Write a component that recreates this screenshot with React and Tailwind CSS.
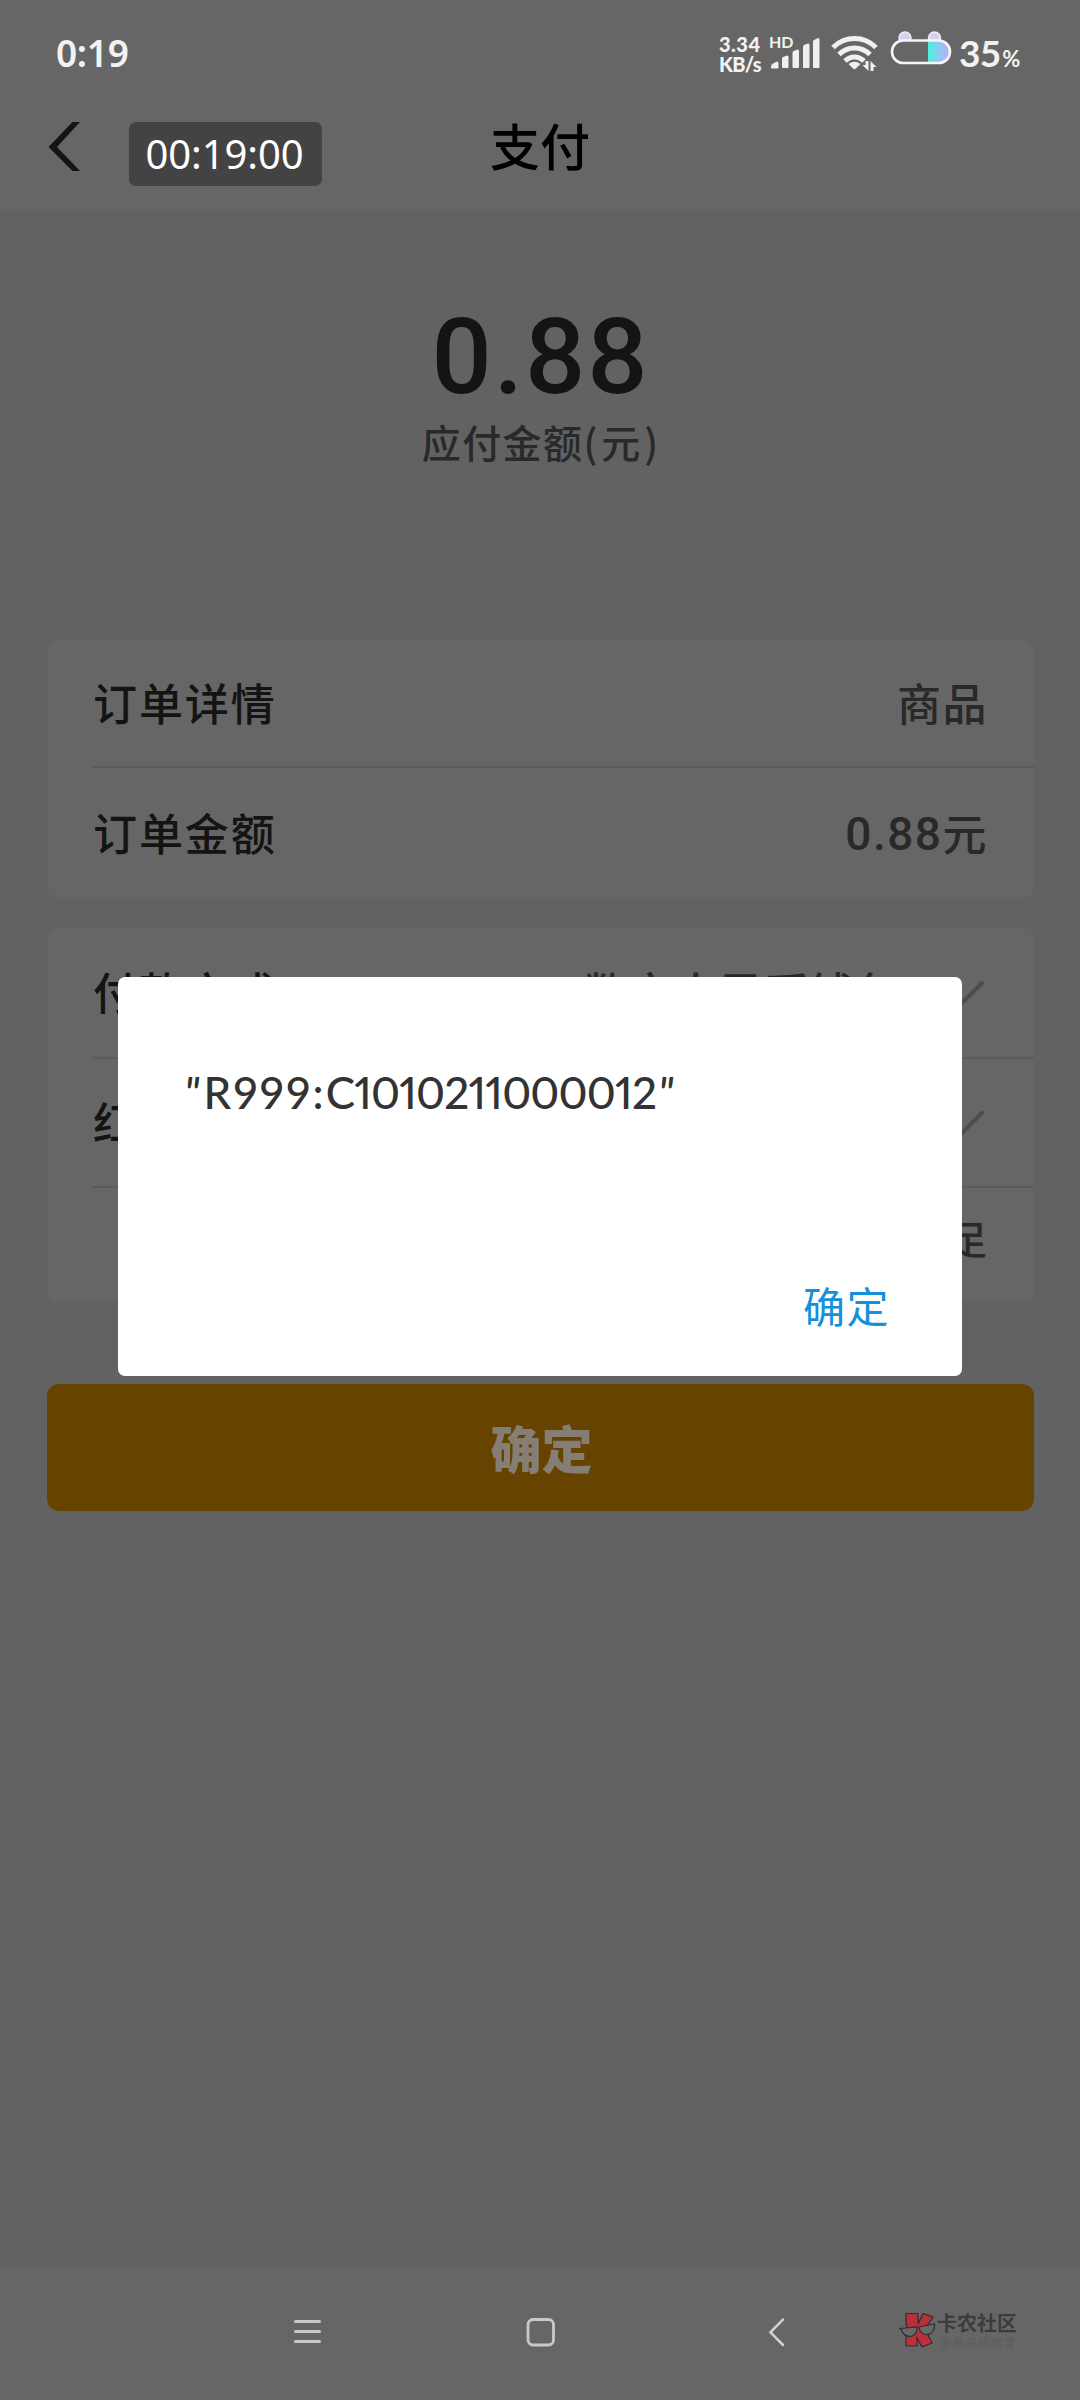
import React from "react";

const orderRows = [
  { label: "订单详情", amount: "", value: "商品", height: "h-[126px]" },
  { label: "订单金额", amount: "0.88", value: "元", height: "h-[131px]" },
];

const payRows = [
  { label: "付款方式", value: "数字人民币钱包", height: "h-[130px]" },
  { label: "红包", value: "", height: "h-[127px]" },
];

const SignalIcon = () => (
  <svg width="50" height="34" viewBox="0 0 50 34" fill="#f0f0f0">
    <path d="M1 31q0-3 3-4l3-1.500q1.500 0 1.500 2v4q0 1-1 1H2q-1 0-1-1Z" />
    <path d="M12 23q0-1 1-2l4-1.500q1.500 0 1.500 1.500v10q0 1-1 1H13q-1 0-1-1Z" />
    <path d="M22.500 17q0-1 1-2l4-1.500q1.500 0 1.500 1.500v16q0 1-1 1h-4.500q-1 0-1-1Z" />
    <path d="M33 11q0-1 1-2l4-1.500q1.500 0 1.500 1.500v22q0 1-1 1H34q-1 0-1-1Z" />
    <path d="M43 6q0-1.500 1-2l4-2q1.500 0 1.500 1.500v27.500q0 1-1 1H44q-1 0-1-1Z" />
  </svg>
);

const WifiIcon = () => (
  <svg width="48" height="36" viewBox="0 0 48 36" fill="none" stroke="#f0f0f0" strokeWidth="5">
    <path d="M2 12.500C14 .500 33 .500 45 12.500" />
    <path d="M8 19.500C17 10.800 30 10.800 39 19.500" />
    <path d="M14 26C19.500 20.500 27.500 20.500 33 26" />
    <path d="M17.500 29Q23.500 24.500 29.500 29L25 33.500Q23.500 35 22 33.500Z" fill="#f0f0f0" stroke="none" />
    <path d="M37.500 26v10l-6-6h3V26ZM39.500 36V26l6 6h-3V36Z" fill="#f0f0f0" stroke="none" />
  </svg>
);

const BatteryIcon = () => (
  <svg width="62" height="38" viewBox="0 0 62 38">
    <defs>
      <linearGradient id="charge" x1="0" x2="1" y1="0" y2="0">
        <stop offset="0" stopColor="#4ff0d8" />
        <stop offset=".5" stopColor="#8cc9f5" />
        <stop offset="1" stopColor="#b9b0ee" />
      </linearGradient>
    </defs>
    <circle cx="15" cy="10" r="6" fill="#d6cff2" stroke="#f0f0f0" strokeWidth="1.500" />
    <circle cx="44.500" cy="10" r="6" fill="#d6cff2" stroke="#f0f0f0" strokeWidth="1.500" />
    <rect x="2" y="12.500" width="58" height="22.500" rx="11.200" fill="#666" />
    <path d="M38 12.500H48.800a11.200 11.200 0 0 1 0 22.500H38Z" fill="url(#charge)" />
    <rect x="2" y="12.500" width="58" height="22.500" rx="11.200" fill="none" stroke="#f6f6f6" strokeWidth="2.600" />
  </svg>
);

const StatusBar = () => (
  <div className="flex h-[102px] items-start pl-[56px] text-[#f2f2f2]">
    <span className="mt-[30px] w-[663px] shrink-0 font-['Noto_Sans'] text-[37px] leading-[46px] font-semibold tracking-[-0.3px]">
      0:19
    </span>
    <div className="mt-[34px] flex font-['Lato'] font-black">
      <div className="w-[51px] shrink-0 text-[20px] leading-[20px]">
        <div className="tracking-[0.5px]">3.34</div>
        <div className="tracking-[-0.7px]">KB/s</div>
      </div>
      <div className="relative w-[61px] shrink-0">
        <span className="absolute top-0 left-[-1px] text-[16px] leading-[15px] font-bold">HD</span>
        <div className="mt-[2px]">
          <SignalIcon />
        </div>
      </div>
      <div className="mt-[1px] w-[59px] shrink-0">
        <WifiIcon />
      </div>
      <div className="-mt-[6px] w-[69px] shrink-0">
        <BatteryIcon />
      </div>
      <div className="flex items-baseline leading-[38px]">
        <span className="text-[37px] font-bold tracking-[-0.8px]">35</span>
        <span className="ml-[2px] text-[22px] font-bold">%</span>
      </div>
    </div>
  </div>
);

const TopBar = () => (
  <header className="h-[210px] bg-[#666666]">
    <StatusBar />
    <div className="relative flex h-[92px] items-start justify-center pt-[2px]">
      <svg className="absolute top-[20px] left-[48px]" width="34" height="50" viewBox="0 0 34 50">
        <path d="M24.500 0H32L9 25 32 49H24.500L.500 25Z" fill="#141414" />
      </svg>
      <div className="absolute top-[20px] left-[129px] flex h-[64px] w-[193px] items-center justify-center rounded-[7px] bg-[#434343] pr-[2px] font-['Noto_Sans'] text-[40px] tracking-[-0.1px] text-white">
        00:19:00
      </div>
      <h1 className="text-[50px] leading-[80px] font-medium text-black">支付</h1>
    </div>
  </header>
);

const ExpandIcon = () => (
  <svg className="mt-[6px]" width="48" height="26" viewBox="0 0 48 26" fill="none" stroke="#4d4d4d" strokeWidth="4" strokeLinecap="round">
    <path d="M2 2l22 22L46 2" />
  </svg>
);

const Divider = () => <div className="ml-[46px] h-[2px] bg-[#5b5b5b]" />;

const OrderCard = () => (
  <section className="h-[258px] rounded-[12px] bg-[#666666]">
    {orderRows.map((row, i) => (
      <React.Fragment key={row.label}>
        {i > 0 && <Divider />}
        <div className={`flex items-center justify-between pr-[46px] pb-[3px] pl-[46px] ${row.height}`}>
          <span className="tracking-[1.900px] text-[#141414]">{row.label}</span>
          <span className="flex items-center tracking-[1.500px] text-[#292929]">
            <span className="mt-[4px] font-['Roboto'] text-[46px]">{row.amount}</span>
            <span>{row.value}</span>
          </span>
        </div>
      </React.Fragment>
    ))}
  </section>
);

const PayCard = () => (
  <section className="mt-[29px] h-[375px] rounded-[12px] bg-[#666666]">
    {payRows.map((row) => (
      <React.Fragment key={row.label}>
        <div className={`flex items-center pr-[50px] pb-[3px] pl-[46px] ${row.height}`}>
          <span className="tracking-[1.900px] text-[#141414]">{row.label}</span>
          <span className="mr-[35px] ml-auto tracking-[1.400px] text-[#292929]">{row.value}</span>
          <ExpandIcon />
        </div>
        <Divider />
      </React.Fragment>
    ))}
    <div className="flex h-[98px] items-center justify-end pr-[47px] text-[39px] text-[#292929]">
      余额不足
    </div>
  </section>
);

const Watermark = () => (
  <div className="absolute top-[42px] left-[899px] flex gap-[1px]">
    <svg width="37" height="38" viewBox="0 0 37 38">
      <path
        d="M7 2.500H19V13L24 2.500 34 6 26 18 33 32 23 36 18 27V35H7V24H8V14H7Z"
        fill="#b9303a"
        stroke="#352b2c"
        strokeWidth="1.200"
      />
      <path d="M1 17.500L18 16Q18.500 24.500 11.500 25.500 4 25.500 2.500 18.500ZM20 16L35.500 13Q36 21.500 29 23.500 21.500 24.500 20 16Z" fill="#6b6869" stroke="#303030" strokeWidth="1.200" />
    </svg>
    <div>
      <div className="text-[20px] leading-[23px] font-bold text-[#3c3c3c]">卡农社区</div>
      <div className="pl-[3px] text-[11px] leading-[16px] font-medium tracking-[1.800px] text-[#5e5e5e]">金融在线教育</div>
    </div>
  </div>
);

const NavBar = () => (
  <nav className="relative mt-auto h-[131px] bg-[#666666]">
    <div className="flex items-start pt-[48px] pl-[294px]">
      <svg width="27" height="30" viewBox="0 0 27 30" stroke="#c9c9c9" strokeWidth="3" strokeLinecap="round">
        <path d="M1.500 4.500H25.500M1.500 14.500H25.500M1.500 24.500H25.500" />
      </svg>
      <svg className="ml-[205px]" width="30" height="30" viewBox="0 0 30 30" fill="none" stroke="#c9c9c9" strokeWidth="2.800">
        <rect x="2" y="2.500" width="25.500" height="25.500" rx="5" />
      </svg>
      <svg className="ml-[212px]" width="18" height="30" viewBox="0 0 18 30" fill="none" stroke="#d2d2d2" strokeWidth="2.500" strokeLinecap="round">
        <path d="M15 2.500L2.500 15.300 15 28" />
      </svg>
    </div>
    <Watermark />
  </nav>
);

const Dialog = () => (
  <div
    role="dialog"
    className="absolute top-[977px] left-[118px] flex h-[399px] w-[844px] flex-col justify-between rounded-[7px] bg-white pt-[85px] pr-[72px] pb-[41px] pl-[66px]"
  >
    <p className="font-['Lato'] text-[44px] leading-[60px] font-medium whitespace-nowrap text-[#333333] proportional-nums">
      <span className="mr-[4px] italic">"</span>
      <span className="tracking-[2.200px]">R999:</span>
      <span className="tracking-[-0.800px]">C1010211000012</span>
      <span className="ml-[2px] italic">"</span>
    </p>
    <button className="self-end text-[42px] leading-[60px] tracking-[1.500px] text-[#1590dc]">确定</button>
  </div>
);

const App = () => {
  return (
    <div className="relative flex h-[2400px] w-[1080px] flex-col overflow-hidden bg-[#626262] font-['Noto_Sans_CJK_SC',sans-serif]">
      <TopBar />
      <main className="pr-[46px] pl-[47px]">
        <div className="flex h-[430px] flex-col items-center pt-[95px]">
          <div className="font-['Roboto'] text-[106px] leading-[104px] font-medium tracking-[2px] text-[#141414]">0.88</div>
          <div className="mt-[3px] flex pl-[3px] text-[39px] leading-[58px] font-medium tracking-[1.400px] text-[#292929]">
            应付金额<span className="tracking-[4px]">(元)</span>
          </div>
        </div>
        <div className="text-[44px] leading-[60px] font-medium">
          <OrderCard />
          <PayCard />
        </div>
        <button className="mt-[82px] h-[127px] w-full rounded-[12px] bg-[#664400] pb-[1px] pl-[2px] text-[51px] font-black text-[#857e75]">
          确定
        </button>
      </main>
      <NavBar />
      <Dialog />
    </div>
  );
};

export default App;
